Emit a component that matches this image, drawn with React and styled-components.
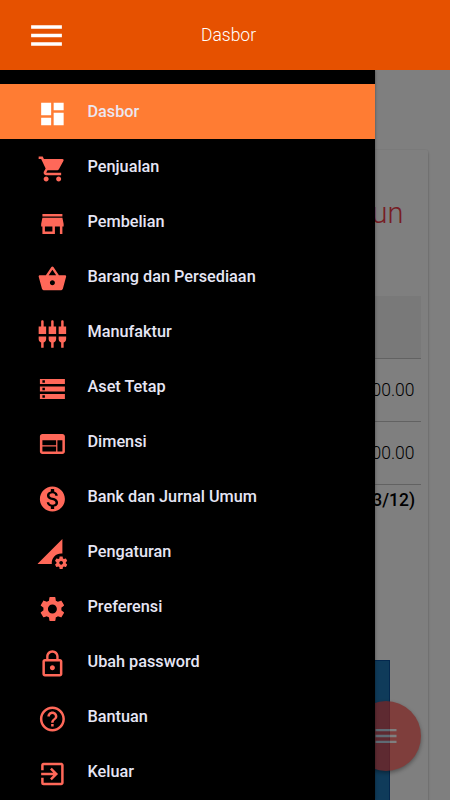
import styled, { createGlobalStyle } from 'styled-components';
import {
  MdDashboard,
  MdExitToApp,
  MdHelpOutline,
  MdLockOutline,
  MdMenu,
  MdMonetizationOn,
  MdPermDataSetting,
  MdSettings,
  MdSettingsInputComponent,
  MdShoppingBasket,
  MdShoppingCart,
  MdStorage,
  MdStore,
  MdWeb
} from 'react-icons/md';

const GlobalStyle = createGlobalStyle`
  *, *::before, *::after {
    box-sizing: border-box;
  }

  body {
    margin: 0;
    font-family: Roboto, 'Liberation Sans', sans-serif;
    overflow: hidden;
  }
`;

const Page = styled.div`
  display: flex;
  flex-direction: column;
  height: 800px;
  overflow: hidden;
  background: #fff;
`;

const Header = styled.header`
  display: grid;
  grid-template-columns: 68px 1fr 68px;
  align-items: center;
  flex: none;
  height: 70px;
  color: #fff;
  background: #e65100;
`;

const MenuButton = styled.button`
  display: flex;
  padding: 0 0 0 26px;
  border: 0;
  color: inherit;
  background: none;
`;

const Title = styled.h1`
  margin: 0;
  padding-left: 7px;
  font-size: 17.5px;
  font-weight: 300;
  line-height: 70px;
  text-align: center;
`;

const Body = styled.div`
  position: relative;
  flex: 1;
  min-height: 0;
  overflow: hidden;
`;

const Card = styled.main`
  display: flex;
  flex-direction: column;
  height: 800px;
  margin: 80px 22px 0;
  padding: 0 7px;
  border-radius: 2px;
  box-shadow: 0 2px 3px rgba(0, 0, 0, 0.24), 0 0 2px rgba(0, 0, 0, 0.12);
`;

const CardTitle = styled.h2`
  margin: 0;
  padding: 43px 17.5px 0 0;
  height: 146px;
  color: #ee3a48;
  font-size: 29px;
  font-weight: 300;
  line-height: 40px;
  text-align: right;
`;

const TableHead = styled.div`
  height: 63px;
  border-bottom: 1px solid #c4c4c4;
  background: #f2f2f2;
`;

const TableRow = styled.div`
  height: 63px;
  padding-right: 6.5px;
  border-bottom: 1px solid #c4c4c4;
  font-size: 17.5px;
  font-weight: 300;
  line-height: 62px;
  text-align: right;
`;

const Period = styled.div`
  height: 175px;
  padding-right: 6px;
  font-size: 17.5px;
  font-weight: 500;
  line-height: 31px;
  text-align: right;
`;

const Chart = styled.div`
  display: flex;
  justify-content: flex-end;
  flex: 1;
  padding-right: 31px;
`;

const Bar = styled.div`
  width: 60px;
  border: 1px solid #08519c;
  background: #1f77b4;
`;

const Fab = styled.button`
  position: absolute;
  right: 29px;
  bottom: 29px;
  display: flex;
  align-items: center;
  justify-content: center;
  width: 70px;
  height: 70px;
  padding: 0;
  border: 0;
  border-radius: 50%;
  color: #fff;
  background: #ff4740;
  box-shadow: 0 2px 4px rgba(0, 0, 0, 0.5);
  opacity: 0.7;
`;

const Overlay = styled.div`
  position: absolute;
  inset: 0;
  background: rgba(0, 0, 0, 0.5);
`;

const Drawer = styled.nav`
  position: absolute;
  top: 0;
  bottom: 0;
  left: 0;
  width: 375px;
  padding-top: 14px;
  overflow: hidden;
  background: #000;
  box-shadow: 0 0 3px rgba(0, 0, 0, 0.4);
`;

const List = styled.ul`
  margin: 0;
  padding: 0;
  list-style: none;
`;

const Item = styled.li`
  display: flex;
  align-items: center;
  height: 55px;
  padding-left: 37px;
  color: ${(props) => (props.$active ? '#fff' : '#ff6859')};
  background: ${(props) => (props.$active ? '#ff7c33' : 'transparent')};

  svg {
    flex: none;
    margin-top: 5px;
    transform: translateX(0.4px);
  }
`;

const Label = styled.span`
  margin-left: 20.5px;
  color: ${(props) => (props.$active ? '#ece6f0' : '#e6e6f5')};
  font-size: 16.25px;
  font-weight: 500;
  line-height: 55px;
  white-space: nowrap;
`;

const items = [
  { label: 'Dasbor', icon: MdDashboard, active: true },
  { label: 'Penjualan', icon: MdShoppingCart },
  { label: 'Pembelian', icon: MdStore },
  { label: 'Barang dan Persediaan', icon: MdShoppingBasket },
  { label: 'Manufaktur', icon: MdSettingsInputComponent },
  { label: 'Aset Tetap', icon: MdStorage },
  { label: 'Dimensi', icon: MdWeb },
  { label: 'Bank dan Jurnal Umum', icon: MdMonetizationOn },
  { label: 'Pengaturan', icon: MdPermDataSetting },
  { label: 'Preferensi', icon: MdSettings },
  { label: 'Ubah password', icon: MdLockOutline },
  { label: 'Bantuan', icon: MdHelpOutline },
  { label: 'Keluar', icon: MdExitToApp }
];

const Dashboard = () => (
  <Card>
    <CardTitle>Tahun</CardTitle>
    <TableHead />
    <TableRow>000.00</TableRow>
    <TableRow>000.00</TableRow>
    <Period>(2023/12)</Period>
    <Chart>
      <Bar />
    </Chart>
  </Card>
);

const SideMenu = () => (
  <Drawer>
    <List>
      {items.map(({ label, icon: Icon, active }) => (
        <Item key={label} $active={active}>
          <Icon size={30} />
          <Label $active={active}>{label}</Label>
        </Item>
      ))}
    </List>
  </Drawer>
);

const App = () => (
  <>
    <GlobalStyle />
    <Page>
      <Header>
        <MenuButton aria-label="Menu">
          <MdMenu size={41} />
        </MenuButton>
        <Title>Dasbor</Title>
      </Header>
      <Body>
        <Dashboard />
        <Fab aria-label="Menu">
          <MdMenu size={28} />
        </Fab>
        <Overlay />
        <SideMenu />
      </Body>
    </Page>
  </>
);

export default App;
